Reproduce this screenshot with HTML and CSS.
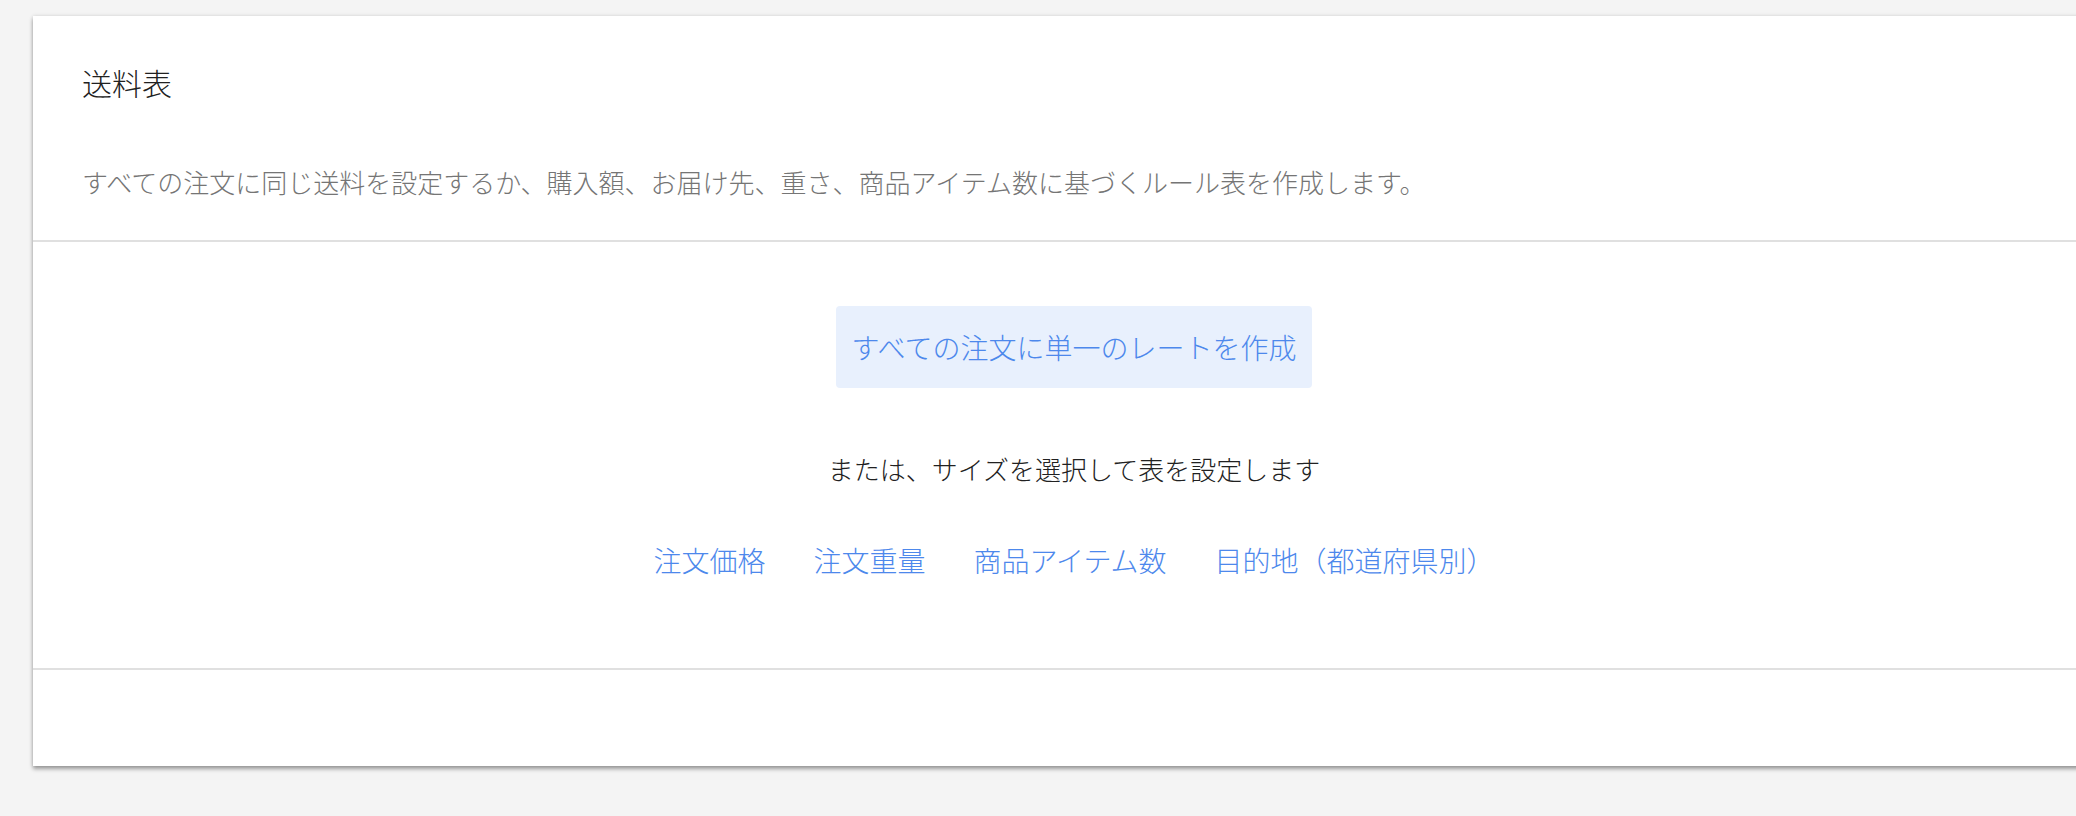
FILE: index.html
```html
<!DOCTYPE html>
<html lang="ja">
<head>
    <meta charset="UTF-8">
    <meta name="viewport" content="width=device-width, initial-scale=1.0">
    <title>送料表</title>
    <link rel="stylesheet" href="styles.css">
</head>
<body>

    <div class="card">
        <div class="card-header">
            <h2 class="card-title">送料表</h2>
            <p class="card-desc">すべての注文に同じ送料を設定するか、購入額、お届け先、重さ、商品アイテム数に基づくルール表を作成します。</p>
        </div>

        <div class="card-body">
            <button type="button" class="single-rate-btn">すべての注文に単一のレートを作成</button>
            <p class="or-text">または、サイズを選択して表を設定します</p>
            <div class="dimension-links">
                <a href="#" class="dimension-link">注文価格</a>
                <a href="#" class="dimension-link">注文重量</a>
                <a href="#" class="dimension-link">商品アイテム数</a>
                <a href="#" class="dimension-link">目的地（都道府県別）</a>
            </div>
        </div>

        <div class="card-footer"></div>
    </div>

</body>
</html>
```

FILE: styles.css
```css
html, body {
    margin: 0;
    padding: 0;
    height: 100%;
}
body {
    background-color: #f4f4f4;
    font-family: "Noto Sans CJK JP", "Noto Sans", sans-serif;
    font-weight: 300;
    overflow: hidden;
}
.card {
    margin: 16px 0 0 33px;
    width: 2082px;
    background-color: #fff;
    box-shadow: 0 3px 4px rgba(0, 0, 0, 0.35), 0 0 4px rgba(0, 0, 0, 0.12);
}
.card-header {
    padding: 46px 49px 40px;
    border-bottom: 2px solid #e0e0e0;
}
.card-title {
    margin: 0;
    font-size: 30px;
    line-height: 40px;
    font-weight: 300;
    color: #212121;
}
.card-desc {
    margin: 62px 0 0;
    font-size: 26px;
    line-height: 36px;
    color: #757575;
}
.card-body {
    display: flex;
    flex-direction: column;
    align-items: center;
    padding: 64px 0 90px;
    border-bottom: 2px solid #e0e0e0;
}
.single-rate-btn {
    font-family: inherit;
    font-weight: 300;
    font-size: 28px;
    line-height: 36px;
    padding: 23px 16px;
    border: none;
    border-radius: 4px;
    background-color: #e8f0fd;
    color: #4d88ec;
    cursor: pointer;
}
.or-text {
    margin: 63px 0 0;
    font-size: 26px;
    line-height: 36px;
    color: #212121;
}
.dimension-links {
    display: flex;
    gap: 48px;
    margin-top: 55px;
}
.dimension-link {
    font-size: 28px;
    line-height: 36px;
    color: #4d88ec;
    text-decoration: none;
}
.card-footer {
    height: 96px;
}
```
